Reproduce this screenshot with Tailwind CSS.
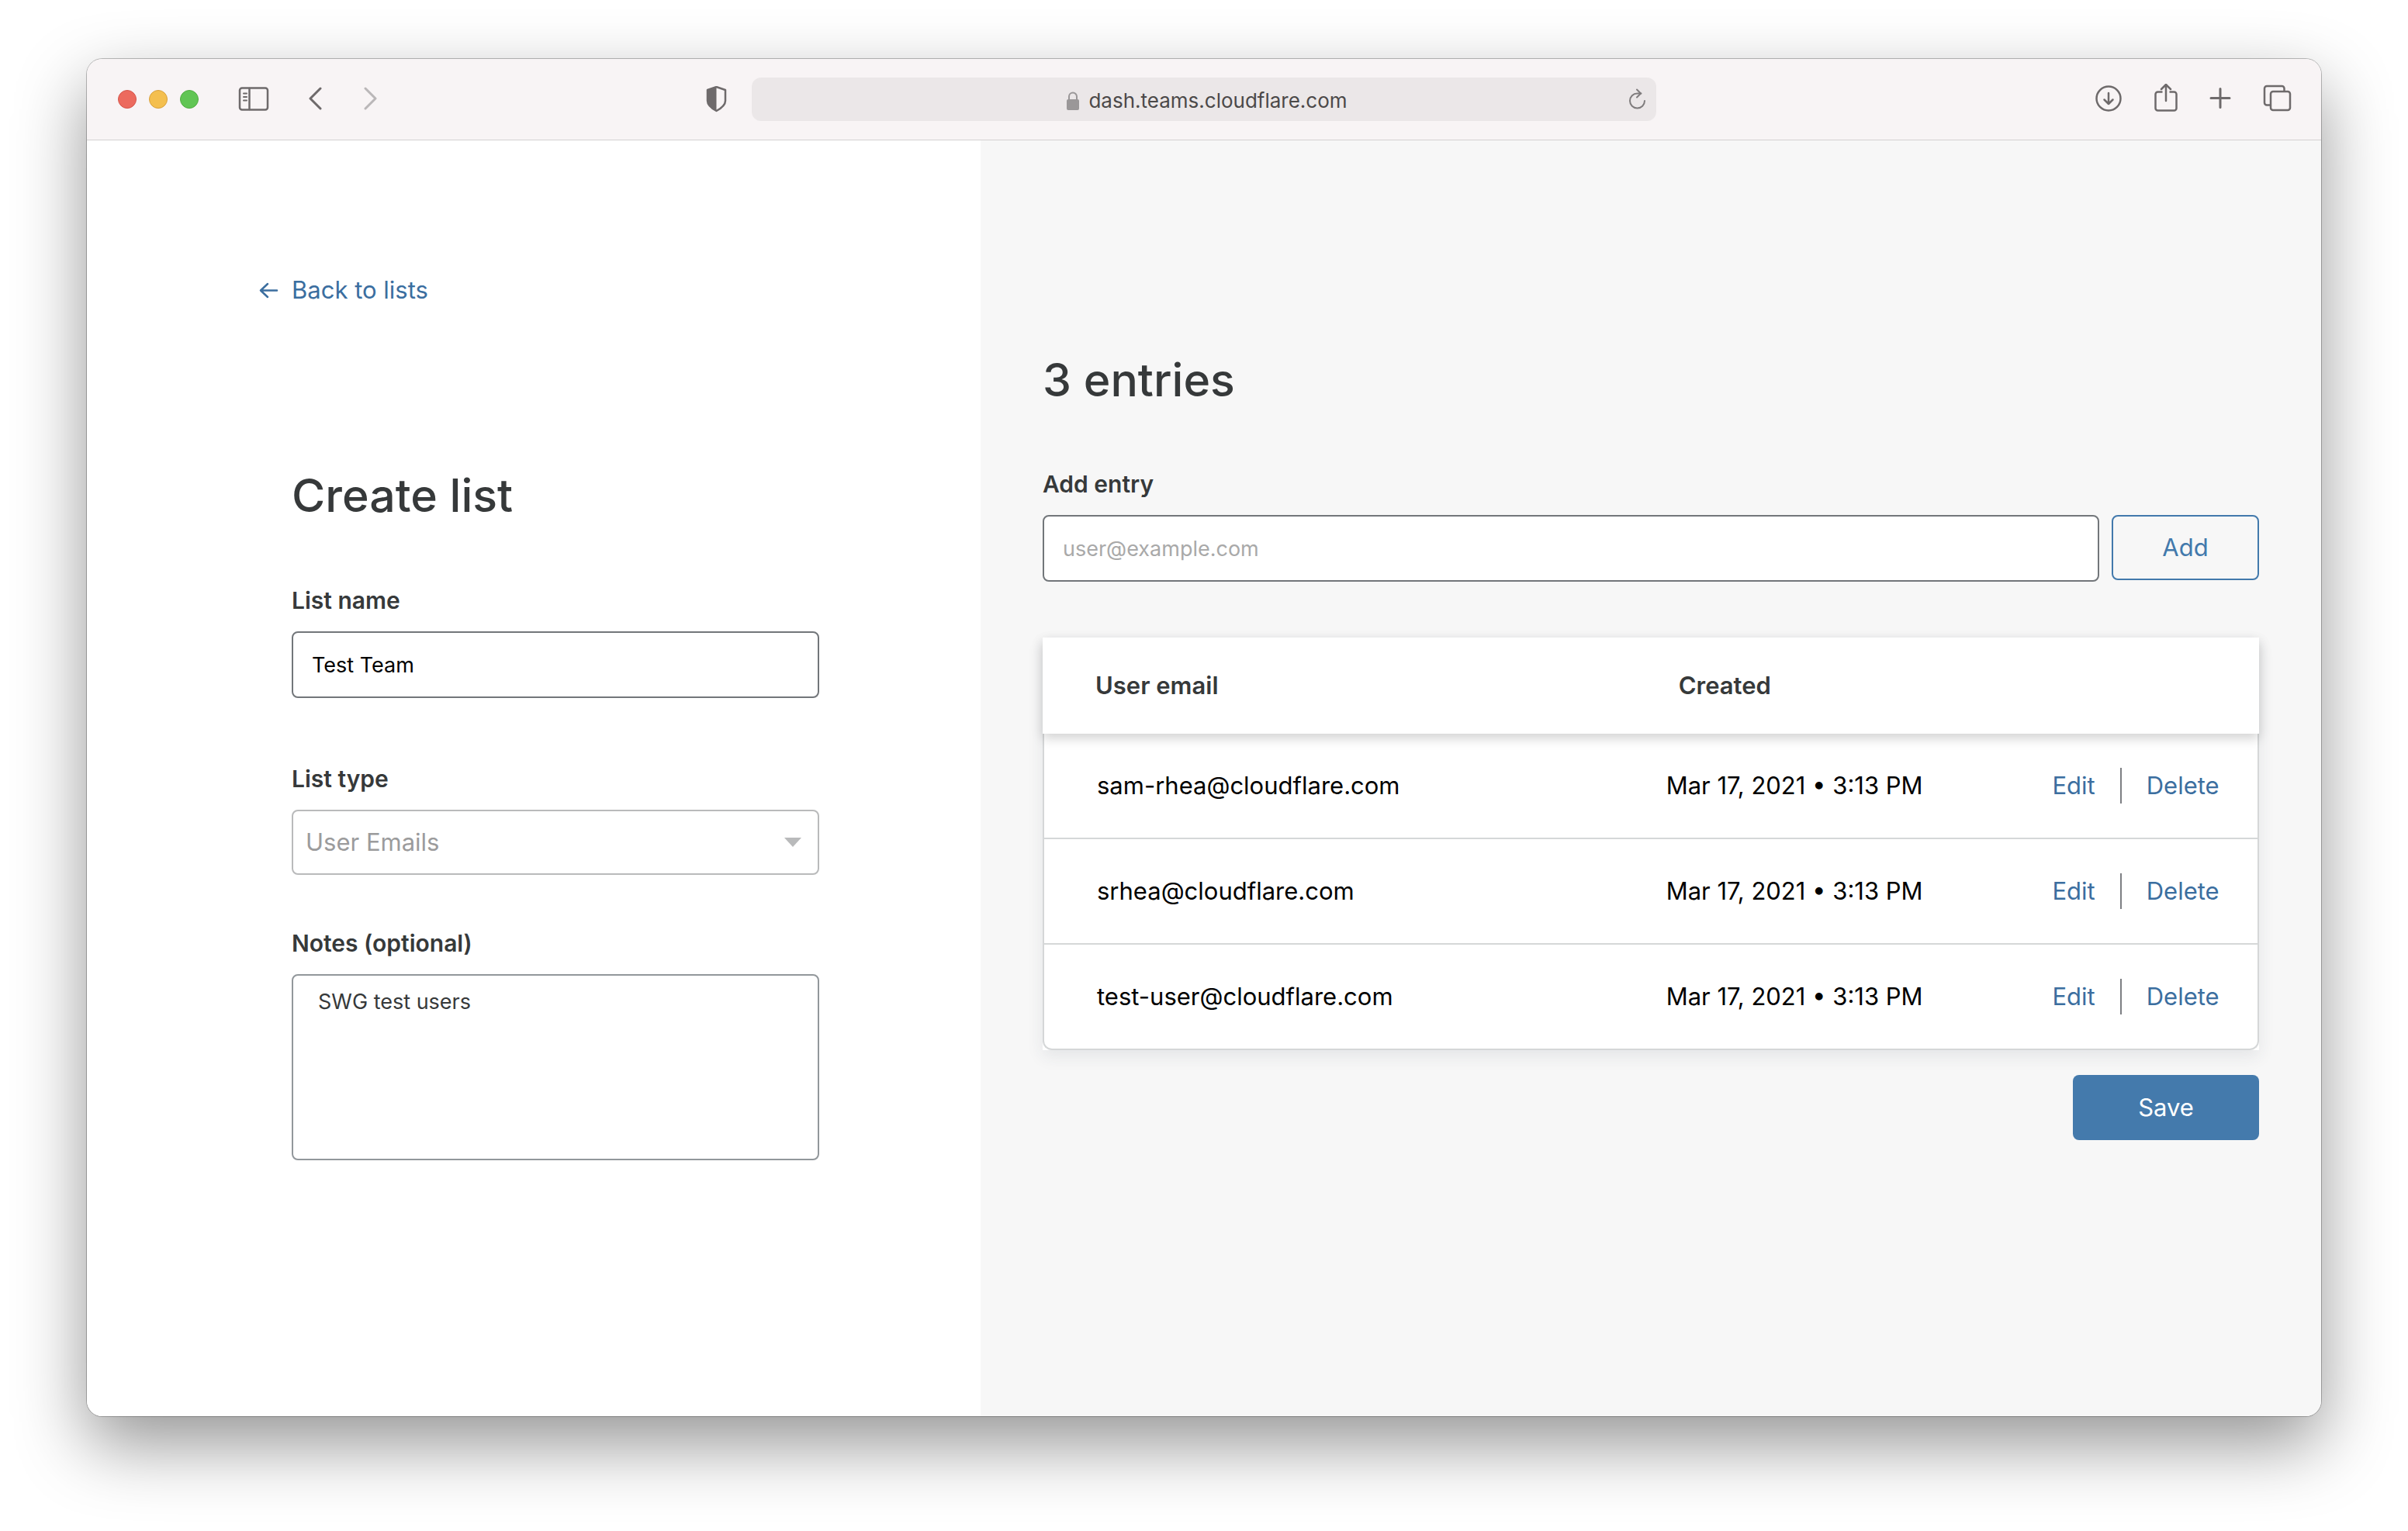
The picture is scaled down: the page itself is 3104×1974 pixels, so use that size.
<!DOCTYPE html>
<html lang="en">
<head>
<meta charset="utf-8">
<meta name="viewport" content="width=device-width, initial-scale=1">
<title>Create list</title>
<script src="https://cdn.jsdelivr.net/npm/@tailwindcss/browser@4"></script>
</head>
<body class="flex min-h-screen flex-col bg-white px-28 pt-19 pb-37 font-['Inter','Liberation_Sans',sans-serif] text-[31px] leading-[48px] text-[#36393a]">
<div class="flex flex-1 flex-col overflow-hidden rounded-[20px] bg-white shadow-[0_0_0_1px_rgba(0,0,0,0.25),0_36px_90px_rgba(0,0,0,0.42)]">

  <!-- Browser toolbar -->
  <header class="grid h-[105px] shrink-0 grid-cols-[1fr_40.5%_1fr] items-center border-b border-[#d3d1d2] bg-[#f8f4f5] text-[#6e6a6b]">
    <div class="flex items-center pr-8 pl-10">
      <div class="flex gap-4">
        <span class="size-6 rounded-full border border-[#d5564c] bg-[#ec6a5e]"></span>
        <span class="size-6 rounded-full border border-[#d8a13d] bg-[#f4bf4f]"></span>
        <span class="size-6 rounded-full border border-[#52ac43] bg-[#61c554]"></span>
      </div>
      <button type="button" aria-label="Show sidebar" class="ml-[51px]">
        <svg class="h-8 w-10" viewBox="0 0 40 32" fill="none" stroke="currentColor" stroke-width="2.500" stroke-linecap="round"><rect x="2" y="1.500" width="36" height="28" rx="3"/><path d="M14.500 2v27"/><path stroke-width="2" d="M7 8.500h4M7 13h4M7 17.500h4"/></svg>
      </button>
      <button type="button" aria-label="Back" class="ml-[49px]">
        <svg class="h-8 w-5" viewBox="0 0 20 32" fill="none" stroke="currentColor" stroke-width="3" stroke-linecap="round" stroke-linejoin="round"><path d="M17 2 4 15l13 13"/></svg>
      </button>
      <button type="button" aria-label="Forward" class="ml-[51px] text-[#bab7b8]">
        <svg class="h-8 w-5" viewBox="0 0 20 32" fill="none" stroke="currentColor" stroke-width="3" stroke-linecap="round" stroke-linejoin="round"><path d="m4 2 13 13L4 28"/></svg>
      </button>
      <button type="button" aria-label="Privacy report" class="ml-auto">
        <svg class="h-[34px] w-7" viewBox="0 0 28 34" fill="none" stroke="currentColor" stroke-width="2.500" stroke-linejoin="round"><path d="M14.500 1 26 5v14c0 6-6 10-11.500 13C9 29 3 25 3 19V5Z"/><path fill="currentColor" stroke="none" d="M14.500 1v31C9 29 3 25 3 19V5Z"/></svg>
      </button>
    </div>
    <div class="flex h-14 items-center rounded-xl bg-[#ebe7e8] pr-3 pl-11">
      <div class="flex flex-1 items-center justify-center gap-3 pt-1 text-[26px] leading-8 text-[#4b4949]">
        <svg class="h-6 w-4" viewBox="0 0 16 24" fill="none"><path d="M3 11V6.500a5 5 0 0 1 10 0V11" stroke="#9a9798" stroke-width="2"/><rect y="10" width="16" height="14" rx="2" fill="#9a9798"/></svg>
        <span>dash.teams.cloudflare.com</span>
      </div>
      <button type="button" aria-label="Reload" class="text-[#7f7c7d]">
        <svg class="h-7 w-6" viewBox="0 0 24 28" fill="none" stroke="currentColor" stroke-width="2" stroke-linecap="round" stroke-linejoin="round"><path d="M21 16A9.500 9.500 0 1 1 11.500 6.500h5"/><path d="m11 1.500 5 5-5 5"/></svg>
      </button>
    </div>
    <div class="flex items-center justify-end pr-[38px]">
      <button type="button" aria-label="Downloads">
        <svg class="h-10 w-9" viewBox="0 0 36 40" fill="none" stroke="currentColor" stroke-width="2.500" stroke-linecap="round" stroke-linejoin="round"><circle cx="18" cy="19" r="15.500"/><path d="M18 12v14M12.500 20.500l5.500 5.500 5.500-5.500"/></svg>
      </button>
      <button type="button" aria-label="Share" class="ml-10">
        <svg class="h-10 w-8" viewBox="0 0 32 40" fill="none" stroke="currentColor" stroke-width="2.500" stroke-linecap="round" stroke-linejoin="round"><path stroke-linecap="butt" d="M11.500 10.500H5.500a3 3 0 0 0-3 3v18a3 3 0 0 0 3 3h21a3 3 0 0 0 3-3v-18a3 3 0 0 0-3-3h-6"/><path d="M16 22V1.500M10 7l6-6 6 6"/></svg>
      </button>
      <button type="button" aria-label="New tab" class="ml-[38px]">
        <svg class="h-10 w-8" viewBox="0 0 32 40" fill="none" stroke="currentColor" stroke-width="3" stroke-linecap="round"><path d="M16 6.500v24M4 18.500h24"/></svg>
      </button>
      <button type="button" aria-label="Tab overview" class="ml-[38px]">
        <svg class="h-10 w-[38px]" viewBox="0 0 38 40" fill="none" stroke="currentColor" stroke-width="2.500" stroke-linejoin="round"><rect x="11" y="10" width="25" height="24" rx="3"/><path d="M11 27.500H6a3 3 0 0 1-3-3V6a3 3 0 0 1 3-3h19.500a3 3 0 0 1 3 3v4"/></svg>
      </button>
    </div>
  </header>

  <main class="flex flex-1">
    <!-- List details -->
    <section class="w-2/5 bg-white pt-[169px] pr-52 pl-[222px]">
      <a href="#" class="flex items-center gap-4 text-[#3b6e9f]">
        <svg class="h-6 w-[26px]" viewBox="0 0 26 24" fill="none" stroke="currentColor" stroke-width="2.500" stroke-linecap="round" stroke-linejoin="round"><path d="M23 12.500H2M11 4l-9 8.500 9 8.500"/></svg>
        Back to lists
      </a>
      <form class="mt-[205px] ml-[42px] flex flex-col">
        <h1 class="text-[59px] leading-[72px] font-medium">Create list</h1>
        <label for="list-name" class="mt-[75px] mb-4 text-[30px] font-semibold">List name</label>
        <input id="list-name" type="text" value="Test Team" class="h-[86px] rounded-lg border-2 border-[#72767a] bg-white px-6 text-[27px] text-black">
        <label for="list-type" class="mt-20 mb-4 text-[30px] font-semibold">List type</label>
        <div class="relative">
          <select id="list-type" disabled class="h-[84px] w-full appearance-none rounded-lg border-2 border-[#b9babb] bg-white px-4 text-[#9b9b9c] opacity-100"><option>User Emails</option></select>
          <svg class="pointer-events-none absolute top-9 right-[22px] h-3 w-6" viewBox="0 0 24 12" fill="#b9babb"><path d="M1 0h22L12 12Z"/></svg>
        </div>
        <label for="notes" class="mt-16 mb-4 text-[30px] font-semibold">Notes (optional)</label>
        <textarea id="notes" class="h-60 resize-none rounded-lg border-2 border-[#92979b] bg-white px-8 pt-3.5 text-[27px] leading-10">SWG test users</textarea>
      </form>
    </section>

    <!-- Entries -->
    <section class="flex-1 bg-[#f7f7f7] px-20 pt-[273px]">
      <h2 class="text-[59px] leading-[72px] font-medium">3 entries</h2>
      <form class="mt-[74px]">
        <label for="entry" class="mb-4 block text-[30px] font-semibold">Add entry</label>
        <div class="flex items-start gap-4">
          <input id="entry" type="email" placeholder="user@example.com" class="h-[86px] min-w-0 flex-1 rounded-lg border-2 border-[#72767a] bg-white px-6 text-[27px] placeholder:text-[#a9a9a9]">
          <button type="submit" class="h-[84px] w-[190px] rounded-lg border-2 border-[#4279ac] text-[#4279ac]">Add</button>
        </div>
      </form>

      <div class="mt-18 bg-white shadow-[0_8px_20px_rgba(40,60,80,0.09)]">
        <table class="w-full table-fixed border-separate border-spacing-0 text-left">
          <colgroup><col class="w-[51%]"><col class="w-[32%]"><col></colgroup>
          <thead class="relative z-10 bg-white shadow-[0_6px_14px_rgba(0,0,0,0.18)]">
            <tr class="h-31">
              <th scope="col" class="pl-17 font-semibold">User email</th>
              <th scope="col" class="pl-5 font-semibold">Created</th>
              <td></td>
            </tr>
          </thead>
          <tbody class="text-black">
            <tr class="h-34">
              <td class="border-b-2 border-l-2 border-[#d5d7d8] pl-17">sam-rhea@cloudflare.com</td>
              <td class="border-b-2 border-[#d5d7d8] pl-1">Mar 17, 2021 • 3:13 PM</td>
              <td class="border-r-2 border-b-2 border-[#d5d7d8] text-[#3b6e9f]"><div class="flex items-center gap-8"><a href="#">Edit</a><span class="h-[46px] w-0.5 bg-[#7d7f83]"></span><a href="#">Delete</a></div></td>
            </tr>
            <tr class="h-34">
              <td class="border-b-2 border-l-2 border-[#d5d7d8] pl-17">srhea@cloudflare.com</td>
              <td class="border-b-2 border-[#d5d7d8] pl-1">Mar 17, 2021 • 3:13 PM</td>
              <td class="border-r-2 border-b-2 border-[#d5d7d8] text-[#3b6e9f]"><div class="flex items-center gap-8"><a href="#">Edit</a><span class="h-[46px] w-0.5 bg-[#7d7f83]"></span><a href="#">Delete</a></div></td>
            </tr>
            <tr class="h-34">
              <td class="rounded-bl-xl border-b-2 border-l-2 border-[#d5d7d8] pl-17">test-user@cloudflare.com</td>
              <td class="border-b-2 border-[#d5d7d8] pl-1">Mar 17, 2021 • 3:13 PM</td>
              <td class="rounded-br-xl border-r-2 border-b-2 border-[#d5d7d8] text-[#3b6e9f]"><div class="flex items-center gap-8"><a href="#">Edit</a><span class="h-[46px] w-0.5 bg-[#7d7f83]"></span><a href="#">Delete</a></div></td>
            </tr>
          </tbody>
        </table>
      </div>

      <div class="mt-8 flex justify-end">
        <button type="button" class="h-[84px] w-60 rounded-lg bg-[#447aac] text-white">Save</button>
      </div>
    </section>
  </main>
</div>
</body>
</html>
